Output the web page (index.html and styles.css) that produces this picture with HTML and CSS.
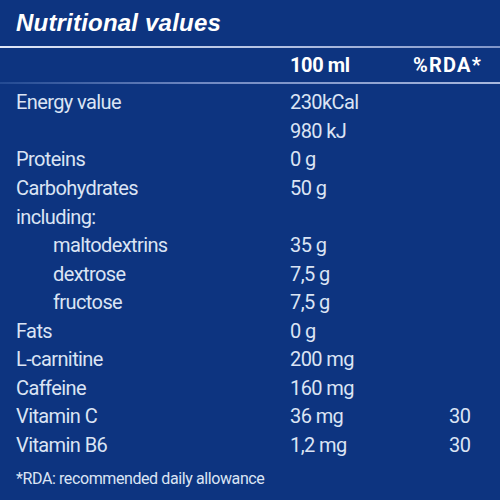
FILE: index.html
```html
<!doctype html>
<html lang="en">
<head>
    <meta charset="utf-8">
    <title>Nutritional values</title>
    <link rel="stylesheet" href="styles.css">
</head>
<body>

<!-- Nutrition panel -->
<section class="panel">
    <h1 class="panel-title">Nutritional values</h1>

    <div class="table">
        <div class="row row-head">
            <span class="cell-name"></span>
            <span class="cell-value">100 ml</span>
            <span class="cell-rda">%RDA*</span>
        </div>

        <div class="row"><span class="cell-name">Energy value</span><span class="cell-value">230kCal</span><span class="cell-rda"></span></div>
        <div class="row"><span class="cell-name"></span><span class="cell-value">980 kJ</span><span class="cell-rda"></span></div>
        <div class="row"><span class="cell-name">Proteins</span><span class="cell-value">0 g</span><span class="cell-rda"></span></div>
        <div class="row"><span class="cell-name">Carbohydrates</span><span class="cell-value">50 g</span><span class="cell-rda"></span></div>
        <div class="row"><span class="cell-name">including:</span><span class="cell-value"></span><span class="cell-rda"></span></div>
        <div class="row row-sub"><span class="cell-name">maltodextrins</span><span class="cell-value">35 g</span><span class="cell-rda"></span></div>
        <div class="row row-sub"><span class="cell-name">dextrose</span><span class="cell-value">7,5 g</span><span class="cell-rda"></span></div>
        <div class="row row-sub"><span class="cell-name">fructose</span><span class="cell-value">7,5 g</span><span class="cell-rda"></span></div>
        <div class="row"><span class="cell-name">Fats</span><span class="cell-value">0 g</span><span class="cell-rda"></span></div>
        <div class="row"><span class="cell-name">L-carnitine</span><span class="cell-value">200 mg</span><span class="cell-rda"></span></div>
        <div class="row"><span class="cell-name">Caffeine</span><span class="cell-value">160 mg</span><span class="cell-rda"></span></div>
        <div class="row"><span class="cell-name">Vitamin C</span><span class="cell-value">36 mg</span><span class="cell-rda">30</span></div>
        <div class="row"><span class="cell-name">Vitamin B6</span><span class="cell-value">1,2 mg</span><span class="cell-rda">30</span></div>
    </div>

    <p class="footnote">*RDA: recommended daily allowance</p>
</section>

</body>
</html>
```

FILE: styles.css
```css
/* Palette */
:root {
    --panel-bg: #0d3480;
    --text-color: #dbe4f4;
    --title-color: #ffffff;
}

html, body {
    margin: 0;
    background: var(--panel-bg);
}

body {
    font-family: Roboto, "DejaVu Sans Condensed", sans-serif;
    color: var(--text-color);
}

.panel {
    width: 500px;
    height: 500px;
    display: flex;
    flex-direction: column;
}

/* Title with a light rule under it */
.panel-title {
    margin: 0;
    padding: 8px 16px 0;
    height: 38px;
    font-family: "Liberation Sans", Arial, sans-serif;
    font-size: 24px;
    font-weight: bold;
    font-style: italic;
    letter-spacing: 0.2px;
    line-height: 30px;
    color: var(--title-color);
    border-bottom: 2px solid transparent;
    border-image: linear-gradient(to right, #dfe7f7, #aebde0 60%, #7f95c9) 1;
}

.table {
    display: flex;
    flex-direction: column;
}

.row {
    display: grid;
    grid-template-columns: 274px 123px 1fr;
    padding-left: 16px;
    height: 28.57px;
    align-items: center;
    font-size: 20px;
    line-height: 28px;
    letter-spacing: -0.6px;
}

/* Column header row */
.row-head {
    height: 34px;
    font-weight: bold;
    letter-spacing: -0.4px;
    color: var(--title-color);
    border-bottom: 2px solid transparent;
    border-image: linear-gradient(to right, #234a93, #6f88c2 40%, #a9b9de) 1;
    margin-bottom: 4px;
}

.row-head .cell-rda {
    padding-left: 0;
    letter-spacing: 1.2px;
}

.row-sub .cell-name {
    padding-left: 37px;
}

.cell-rda {
    padding-left: 36px;
}

.footnote {
    margin: 10px 0 0;
    padding-left: 16px;
    font-size: 16px;
    line-height: 20px;
    letter-spacing: -0.4px;
}
```
